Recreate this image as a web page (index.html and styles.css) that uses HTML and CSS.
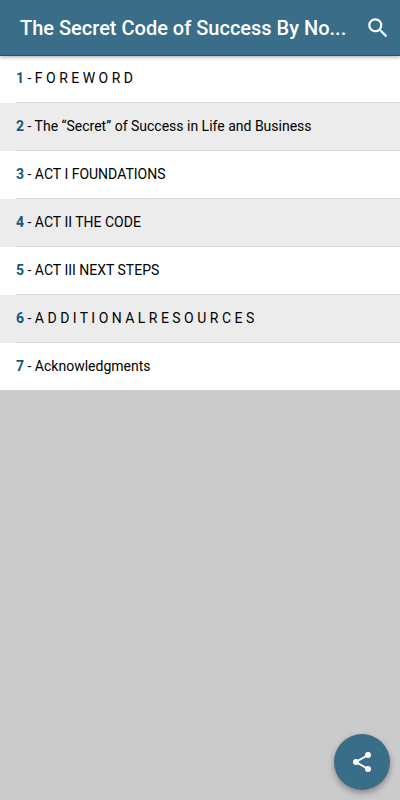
FILE: index.html
```html
<!DOCTYPE html>
<html lang="en">
<head>
  <meta charset="UTF-8">
  <meta name="viewport" content="width=device-width, initial-scale=1.0">
  <title>The Secret Code of Success</title>
  <link rel="stylesheet" href="styles.css">
</head>
<body>
  <header class="toolbar">
    <h1 class="title">The Secret Code of Success By No...</h1>
    <button class="search-btn" type="button" aria-label="Search">
      <svg viewBox="0 0 24 24" width="26" height="26">
        <path fill="currentColor" d="M15.5 14h-.79l-.28-.27A6.47 6.47 0 0 0 16 9.500 6.500 6.500 0 1 0 9.500 16c1.610 0 3.090-.59 4.230-1.570l.27.28v.79l5 4.990L20.490 19l-4.990-5zm-6 0a4.500 4.500 0 1 1 0-9 4.500 4.500 0 0 1 0 9z"/>
      </svg>
    </button>
  </header>

  <main>
    <ul class="chapters">
      <li><a href="#chapter-1"><b>1</b> - F O R E W O R D</a></li>
      <li><a href="#chapter-2"><b>2</b> - The “Secret” of Success in Life and Business</a></li>
      <li><a href="#chapter-3"><b>3</b> - ACT I FOUNDATIONS</a></li>
      <li><a href="#chapter-4"><b>4</b> - ACT II THE CODE</a></li>
      <li><a href="#chapter-5"><b>5</b> - ACT III NEXT STEPS</a></li>
      <li><a href="#chapter-6"><b>6</b> - A D D I T I O N A L R E S O U R C E S</a></li>
      <li><a href="#chapter-7"><b>7</b> - Acknowledgments</a></li>
    </ul>
  </main>

  <button class="share-btn" type="button" aria-label="Share">
    <svg viewBox="0 0 24 24" width="24" height="24">
      <path fill="none" stroke="currentColor" stroke-width="2" d="M18 5L6 12l12 7"/>
      <circle fill="currentColor" cx="18" cy="5" r="3"/>
      <circle fill="currentColor" cx="6" cy="12" r="3"/>
      <circle fill="currentColor" cx="18" cy="19" r="3"/>
    </svg>
  </button>
</body>
</html>
```

FILE: styles.css
```css
body {
  margin: 0;
  background-color: #cbcbcb;
  font-family: Roboto, sans-serif;
}

button {
  display: flex;
  align-items: center;
  justify-content: center;
  padding: 0;
  border: none;
  color: #ffffff;
  cursor: pointer;
}

.toolbar {
  position: sticky;
  top: 0;
  z-index: 1;
  display: flex;
  align-items: center;
  box-sizing: border-box;
  height: 56px;
  padding: 0 9px 0 20px;
  background-color: #3a6d88;
  border-bottom: 1px solid #14597c;
  box-shadow: 0 1px 4px rgba(0, 0, 0, 0.35);
}

.title {
  flex: 1;
  margin: 0;
  color: #ffffff;
  font-size: 20px;
  font-weight: 500;
  white-space: nowrap;
  overflow: hidden;
  text-overflow: ellipsis;
}

.search-btn {
  background: none;
}

.chapters {
  margin: 0;
  margin-top: -1px;
  padding: 0;
  list-style: none;
  background-color: #ffffff;
}

.chapters li {
  padding-left: 16px;
}

.chapters li:nth-child(even) {
  background-color: #ececec;
}

.chapters a {
  display: block;
  color: #000000;
  font-size: 14px;
  line-height: 47px;
  text-decoration: none;
  border-bottom: 1px solid #d5d5d5;
}

.chapters li:last-child a {
  border-bottom: none;
}

.chapters b {
  color: #14597c;
  font-weight: 700;
}

.share-btn {
  position: fixed;
  right: 10px;
  bottom: 10px;
  width: 56px;
  height: 56px;
  border-radius: 50%;
  background-color: #3a6d88;
  box-shadow: 0 3px 6px rgba(0, 0, 0, 0.35);
}
```
